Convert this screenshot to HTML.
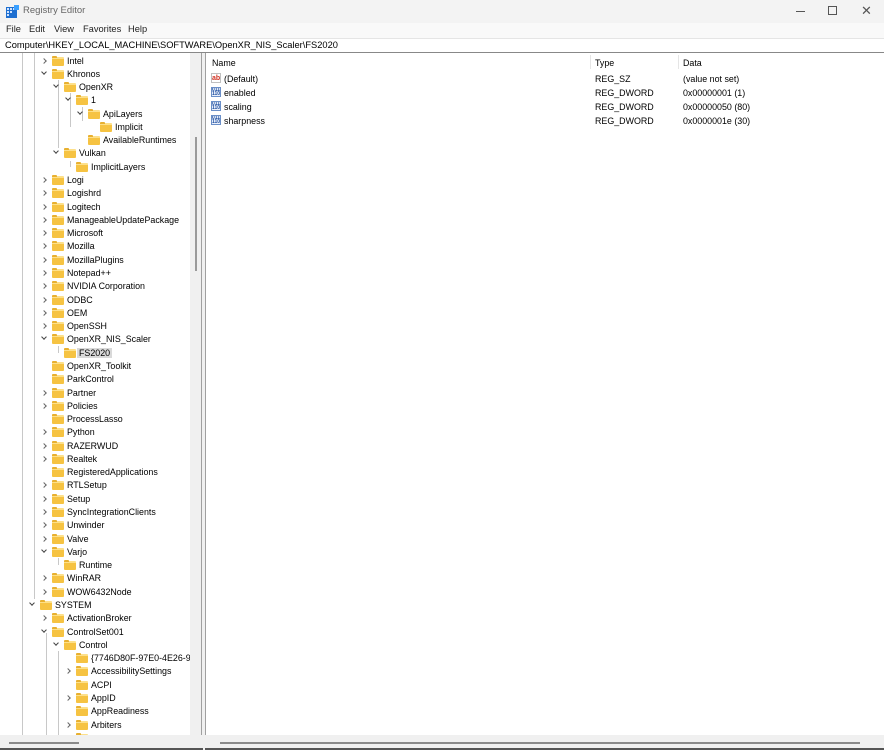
<!DOCTYPE html>
<html><head><meta charset="utf-8"><style>
*{margin:0;padding:0;box-sizing:border-box}
body{width:884px;height:750px;overflow:hidden;background:#f0f0f0;font-family:"Segoe UI","Liberation Sans",sans-serif;font-size:8.9px;color:#000;position:relative}
.abs{position:absolute}
#title{left:0;top:0;width:884px;height:23px;background:#f3f3f3}
#menu{left:0;top:23px;width:884px;height:15px;background:#f9f9f9;font-size:9.3px;color:#222}
#menu span{position:absolute;top:1px}
#addr{left:0;top:38px;width:884px;height:15px;background:#fff;border-top:1px solid #e5e5e5;border-bottom:1px solid #888;font-size:9.3px;padding:1px 0 0 5px}
#left{left:0;top:53px;width:202px;height:682px;background:#fff;border-right:1px solid #a0a0a0;overflow:hidden}
#vscroll{left:190px;top:0;width:12px;height:682px;background:#f0f0f0}
#thumb{left:195px;top:84px;width:2px;height:134px;background:#9a9a9a}
#right{left:205px;top:53px;width:679px;height:682px;background:#fff;border-left:1px solid #a0a0a0}
.r{position:absolute;top:calc(54.5px + var(--i)*13.28px - 53px);left:calc(55px + var(--l)*12px);height:13px;line-height:13px;white-space:nowrap}
.r .f{position:absolute;left:-15px;top:2px;width:12px;height:9px;background:#f6c342;border-top:2px solid #fde08a;border-radius:1px}
.r .f::before{content:"";position:absolute;left:0;top:-3px;width:5px;height:2px;background:#e8b030;border-radius:1px 1px 0 0}
.r .c{position:absolute;left:-27px;top:0;width:8px;color:#555;text-align:center}
.cl{display:inline-block;width:4px;height:4px;border-right:1px solid #666;border-bottom:1px solid #666;transform:rotate(-45deg);position:relative;top:-1px}
.op{display:inline-block;width:4px;height:4px;border-right:1px solid #444;border-bottom:1px solid #444;transform:rotate(45deg);position:relative;top:-3px}
.sel{background:#d9d9d9;padding:0 2px;margin-left:-2px}
.vl{position:absolute;width:1px;background:#c8c8c8}
#hs1{left:0;top:735px;width:203px;height:15px;background:#f0f0f0}
#hs2{left:205px;top:735px;width:679px;height:15px;background:#f0f0f0}
.hl{position:absolute;top:7px;height:2px;background:#8a8a8a}
.rr{position:absolute;height:14px;line-height:14px;white-space:nowrap}
.ic{position:absolute;left:211px;width:10px;height:10px;border:1px solid #6a8fc8;background:#eaf0fb;font-size:5px;line-height:4px;color:#2050a0;text-align:center;font-weight:bold;overflow:hidden}
.ab{border-color:#c0c0c0;background:#fff;color:#d03020;font-size:7px;line-height:9px}
</style></head><body>
<div id="title" class="abs">
 <svg class="abs" style="left:6px;top:5px" width="13" height="13" viewBox="0 0 13 13"><rect x="0" y="2" width="11" height="11" fill="#1e6fd0"/><rect x="1" y="3" width="2" height="2" fill="#cfe3ff"/><rect x="4" y="3" width="2" height="2" fill="#cfe3ff"/><rect x="7" y="3" width="2" height="2" fill="#cfe3ff"/><rect x="1" y="6" width="2" height="2" fill="#cfe3ff"/><rect x="4" y="6" width="2" height="2" fill="#cfe3ff"/><rect x="1" y="9" width="2" height="2" fill="#cfe3ff"/><rect x="8" y="0" width="5" height="5" fill="#3aa0ff"/></svg>
 <span class="abs" style="left:23px;top:5px;font-size:9.5px;color:#666">Registry Editor</span>
 <div class="abs" style="left:796px;top:11px;width:9px;height:1px;background:#555"></div>
 <div class="abs" style="left:828px;top:6px;width:9px;height:9px;border:1px solid #555"></div>
 <span class="abs" style="left:861px;top:3px;font-size:13px;color:#555">✕</span>
</div>
<div id="menu" class="abs"><span style="left:6px">File</span><span style="left:29px">Edit</span><span style="left:54px">View</span><span style="left:83px">Favorites</span><span style="left:128px">Help</span></div>
<div id="addr" class="abs">Computer\HKEY_LOCAL_MACHINE\SOFTWARE\OpenXR_NIS_Scaler\FS2020</div>
<div id="left" class="abs">
 <div class="vl" style="left:22px;top:0;height:682px"></div>
 <div class="vl" style="left:34px;top:0;height:546px"></div>
 <div class="vl" style="left:46px;top:580px;height:102px"></div>
 <div class="vl" style="left:58px;top:598px;height:84px"></div>
 <div class="vl" style="left:58px;top:27px;height:68px"></div>
 <div class="vl" style="left:70px;top:40px;height:34px"></div>
 <div class="vl" style="left:82px;top:54px;height:14px"></div>
 <div class="vl" style="left:70px;top:108px;height:6px"></div>
 <div class="vl" style="left:58px;top:293px;height:7px"></div>
 <div class="vl" style="left:58px;top:505px;height:7px"></div>
 <div class="r" style="--i:0;--l:1"><span class="c"><i class="cl"></i></span><span class="f"></span>Intel</div>
 <div class="r" style="--i:1;--l:1"><span class="c"><i class="op"></i></span><span class="f"></span>Khronos</div>
 <div class="r" style="--i:2;--l:2"><span class="c"><i class="op"></i></span><span class="f"></span>OpenXR</div>
 <div class="r" style="--i:3;--l:3"><span class="c"><i class="op"></i></span><span class="f"></span>1</div>
 <div class="r" style="--i:4;--l:4"><span class="c"><i class="op"></i></span><span class="f"></span>ApiLayers</div>
 <div class="r" style="--i:5;--l:5"><span class="f"></span>Implicit</div>
 <div class="r" style="--i:6;--l:4"><span class="f"></span>AvailableRuntimes</div>
 <div class="r" style="--i:7;--l:2"><span class="c"><i class="op"></i></span><span class="f"></span>Vulkan</div>
 <div class="r" style="--i:8;--l:3"><span class="f"></span>ImplicitLayers</div>
 <div class="r" style="--i:9;--l:1"><span class="c"><i class="cl"></i></span><span class="f"></span>Logi</div>
 <div class="r" style="--i:10;--l:1"><span class="c"><i class="cl"></i></span><span class="f"></span>Logishrd</div>
 <div class="r" style="--i:11;--l:1"><span class="c"><i class="cl"></i></span><span class="f"></span>Logitech</div>
 <div class="r" style="--i:12;--l:1"><span class="c"><i class="cl"></i></span><span class="f"></span>ManageableUpdatePackage</div>
 <div class="r" style="--i:13;--l:1"><span class="c"><i class="cl"></i></span><span class="f"></span>Microsoft</div>
 <div class="r" style="--i:14;--l:1"><span class="c"><i class="cl"></i></span><span class="f"></span>Mozilla</div>
 <div class="r" style="--i:15;--l:1"><span class="c"><i class="cl"></i></span><span class="f"></span>MozillaPlugins</div>
 <div class="r" style="--i:16;--l:1"><span class="c"><i class="cl"></i></span><span class="f"></span>Notepad++</div>
 <div class="r" style="--i:17;--l:1"><span class="c"><i class="cl"></i></span><span class="f"></span>NVIDIA Corporation</div>
 <div class="r" style="--i:18;--l:1"><span class="c"><i class="cl"></i></span><span class="f"></span>ODBC</div>
 <div class="r" style="--i:19;--l:1"><span class="c"><i class="cl"></i></span><span class="f"></span>OEM</div>
 <div class="r" style="--i:20;--l:1"><span class="c"><i class="cl"></i></span><span class="f"></span>OpenSSH</div>
 <div class="r" style="--i:21;--l:1"><span class="c"><i class="op"></i></span><span class="f"></span>OpenXR_NIS_Scaler</div>
 <div class="r" style="--i:22;--l:2"><span class="f"></span><span class="sel">FS2020</span></div>
 <div class="r" style="--i:23;--l:1"><span class="f"></span>OpenXR_Toolkit</div>
 <div class="r" style="--i:24;--l:1"><span class="f"></span>ParkControl</div>
 <div class="r" style="--i:25;--l:1"><span class="c"><i class="cl"></i></span><span class="f"></span>Partner</div>
 <div class="r" style="--i:26;--l:1"><span class="c"><i class="cl"></i></span><span class="f"></span>Policies</div>
 <div class="r" style="--i:27;--l:1"><span class="f"></span>ProcessLasso</div>
 <div class="r" style="--i:28;--l:1"><span class="c"><i class="cl"></i></span><span class="f"></span>Python</div>
 <div class="r" style="--i:29;--l:1"><span class="c"><i class="cl"></i></span><span class="f"></span>RAZERWUD</div>
 <div class="r" style="--i:30;--l:1"><span class="c"><i class="cl"></i></span><span class="f"></span>Realtek</div>
 <div class="r" style="--i:31;--l:1"><span class="f"></span>RegisteredApplications</div>
 <div class="r" style="--i:32;--l:1"><span class="c"><i class="cl"></i></span><span class="f"></span>RTLSetup</div>
 <div class="r" style="--i:33;--l:1"><span class="c"><i class="cl"></i></span><span class="f"></span>Setup</div>
 <div class="r" style="--i:34;--l:1"><span class="c"><i class="cl"></i></span><span class="f"></span>SyncIntegrationClients</div>
 <div class="r" style="--i:35;--l:1"><span class="c"><i class="cl"></i></span><span class="f"></span>Unwinder</div>
 <div class="r" style="--i:36;--l:1"><span class="c"><i class="cl"></i></span><span class="f"></span>Valve</div>
 <div class="r" style="--i:37;--l:1"><span class="c"><i class="op"></i></span><span class="f"></span>Varjo</div>
 <div class="r" style="--i:38;--l:2"><span class="f"></span>Runtime</div>
 <div class="r" style="--i:39;--l:1"><span class="c"><i class="cl"></i></span><span class="f"></span>WinRAR</div>
 <div class="r" style="--i:40;--l:1"><span class="c"><i class="cl"></i></span><span class="f"></span>WOW6432Node</div>
 <div class="r" style="--i:41;--l:0"><span class="c"><i class="op"></i></span><span class="f"></span>SYSTEM</div>
 <div class="r" style="--i:42;--l:1"><span class="c"><i class="cl"></i></span><span class="f"></span>ActivationBroker</div>
 <div class="r" style="--i:43;--l:1"><span class="c"><i class="op"></i></span><span class="f"></span>ControlSet001</div>
 <div class="r" style="--i:44;--l:2"><span class="c"><i class="op"></i></span><span class="f"></span>Control</div>
 <div class="r" style="--i:45;--l:3"><span class="f"></span>{7746D80F-97E0-4E26-9543-26B41FC22F79}</div>
 <div class="r" style="--i:46;--l:3"><span class="c"><i class="cl"></i></span><span class="f"></span>AccessibilitySettings</div>
 <div class="r" style="--i:47;--l:3"><span class="f"></span>ACPI</div>
 <div class="r" style="--i:48;--l:3"><span class="c"><i class="cl"></i></span><span class="f"></span>AppID</div>
 <div class="r" style="--i:49;--l:3"><span class="f"></span>AppReadiness</div>
 <div class="r" style="--i:50;--l:3"><span class="c"><i class="cl"></i></span><span class="f"></span>Arbiters</div>
 <div class="r" style="--i:51;--l:3"><span class="f"></span></div>
 <div id="vscroll" class="abs"></div>
 <div id="thumb" class="abs"></div>
</div>
<div id="right" class="abs">
 <div class="rr" style="left:6px;top:3px">Name</div>
 <div class="abs" style="left:384px;top:2px;width:1px;height:14px;background:#e5e5e5"></div>
 <div class="rr" style="left:389px;top:3px">Type</div>
 <div class="abs" style="left:472px;top:2px;width:1px;height:14px;background:#e5e5e5"></div>
 <div class="rr" style="left:477px;top:3px">Data</div>
</div>
<div class="ic ab" style="top:73px">ab</div>
<div class="ic" style="top:87px">011<br>110</div>
<div class="ic" style="top:101px">011<br>110</div>
<div class="ic" style="top:115px">011<br>110</div>
<div class="rr" style="left:224px;top:72px">(Default)</div><div class="rr" style="left:595px;top:72px">REG_SZ</div><div class="rr" style="left:683px;top:72px">(value not set)</div>
<div class="rr" style="left:224px;top:86px">enabled</div><div class="rr" style="left:595px;top:86px">REG_DWORD</div><div class="rr" style="left:683px;top:86px">0x00000001 (1)</div>
<div class="rr" style="left:224px;top:100px">scaling</div><div class="rr" style="left:595px;top:100px">REG_DWORD</div><div class="rr" style="left:683px;top:100px">0x00000050 (80)</div>
<div class="rr" style="left:224px;top:114px">sharpness</div><div class="rr" style="left:595px;top:114px">REG_DWORD</div><div class="rr" style="left:683px;top:114px">0x0000001e (30)</div>
<div id="hs1" class="abs"><div class="hl" style="left:9px;width:70px"></div></div>
<div id="hs2" class="abs"><div class="hl" style="left:15px;width:640px"></div></div>
<div class="abs" style="left:0;top:748px;width:884px;height:2px;background:#555"></div>
<div class="abs" style="left:203px;top:53px;width:2px;height:697px;background:#f0f0f0"></div>
</body></html>
